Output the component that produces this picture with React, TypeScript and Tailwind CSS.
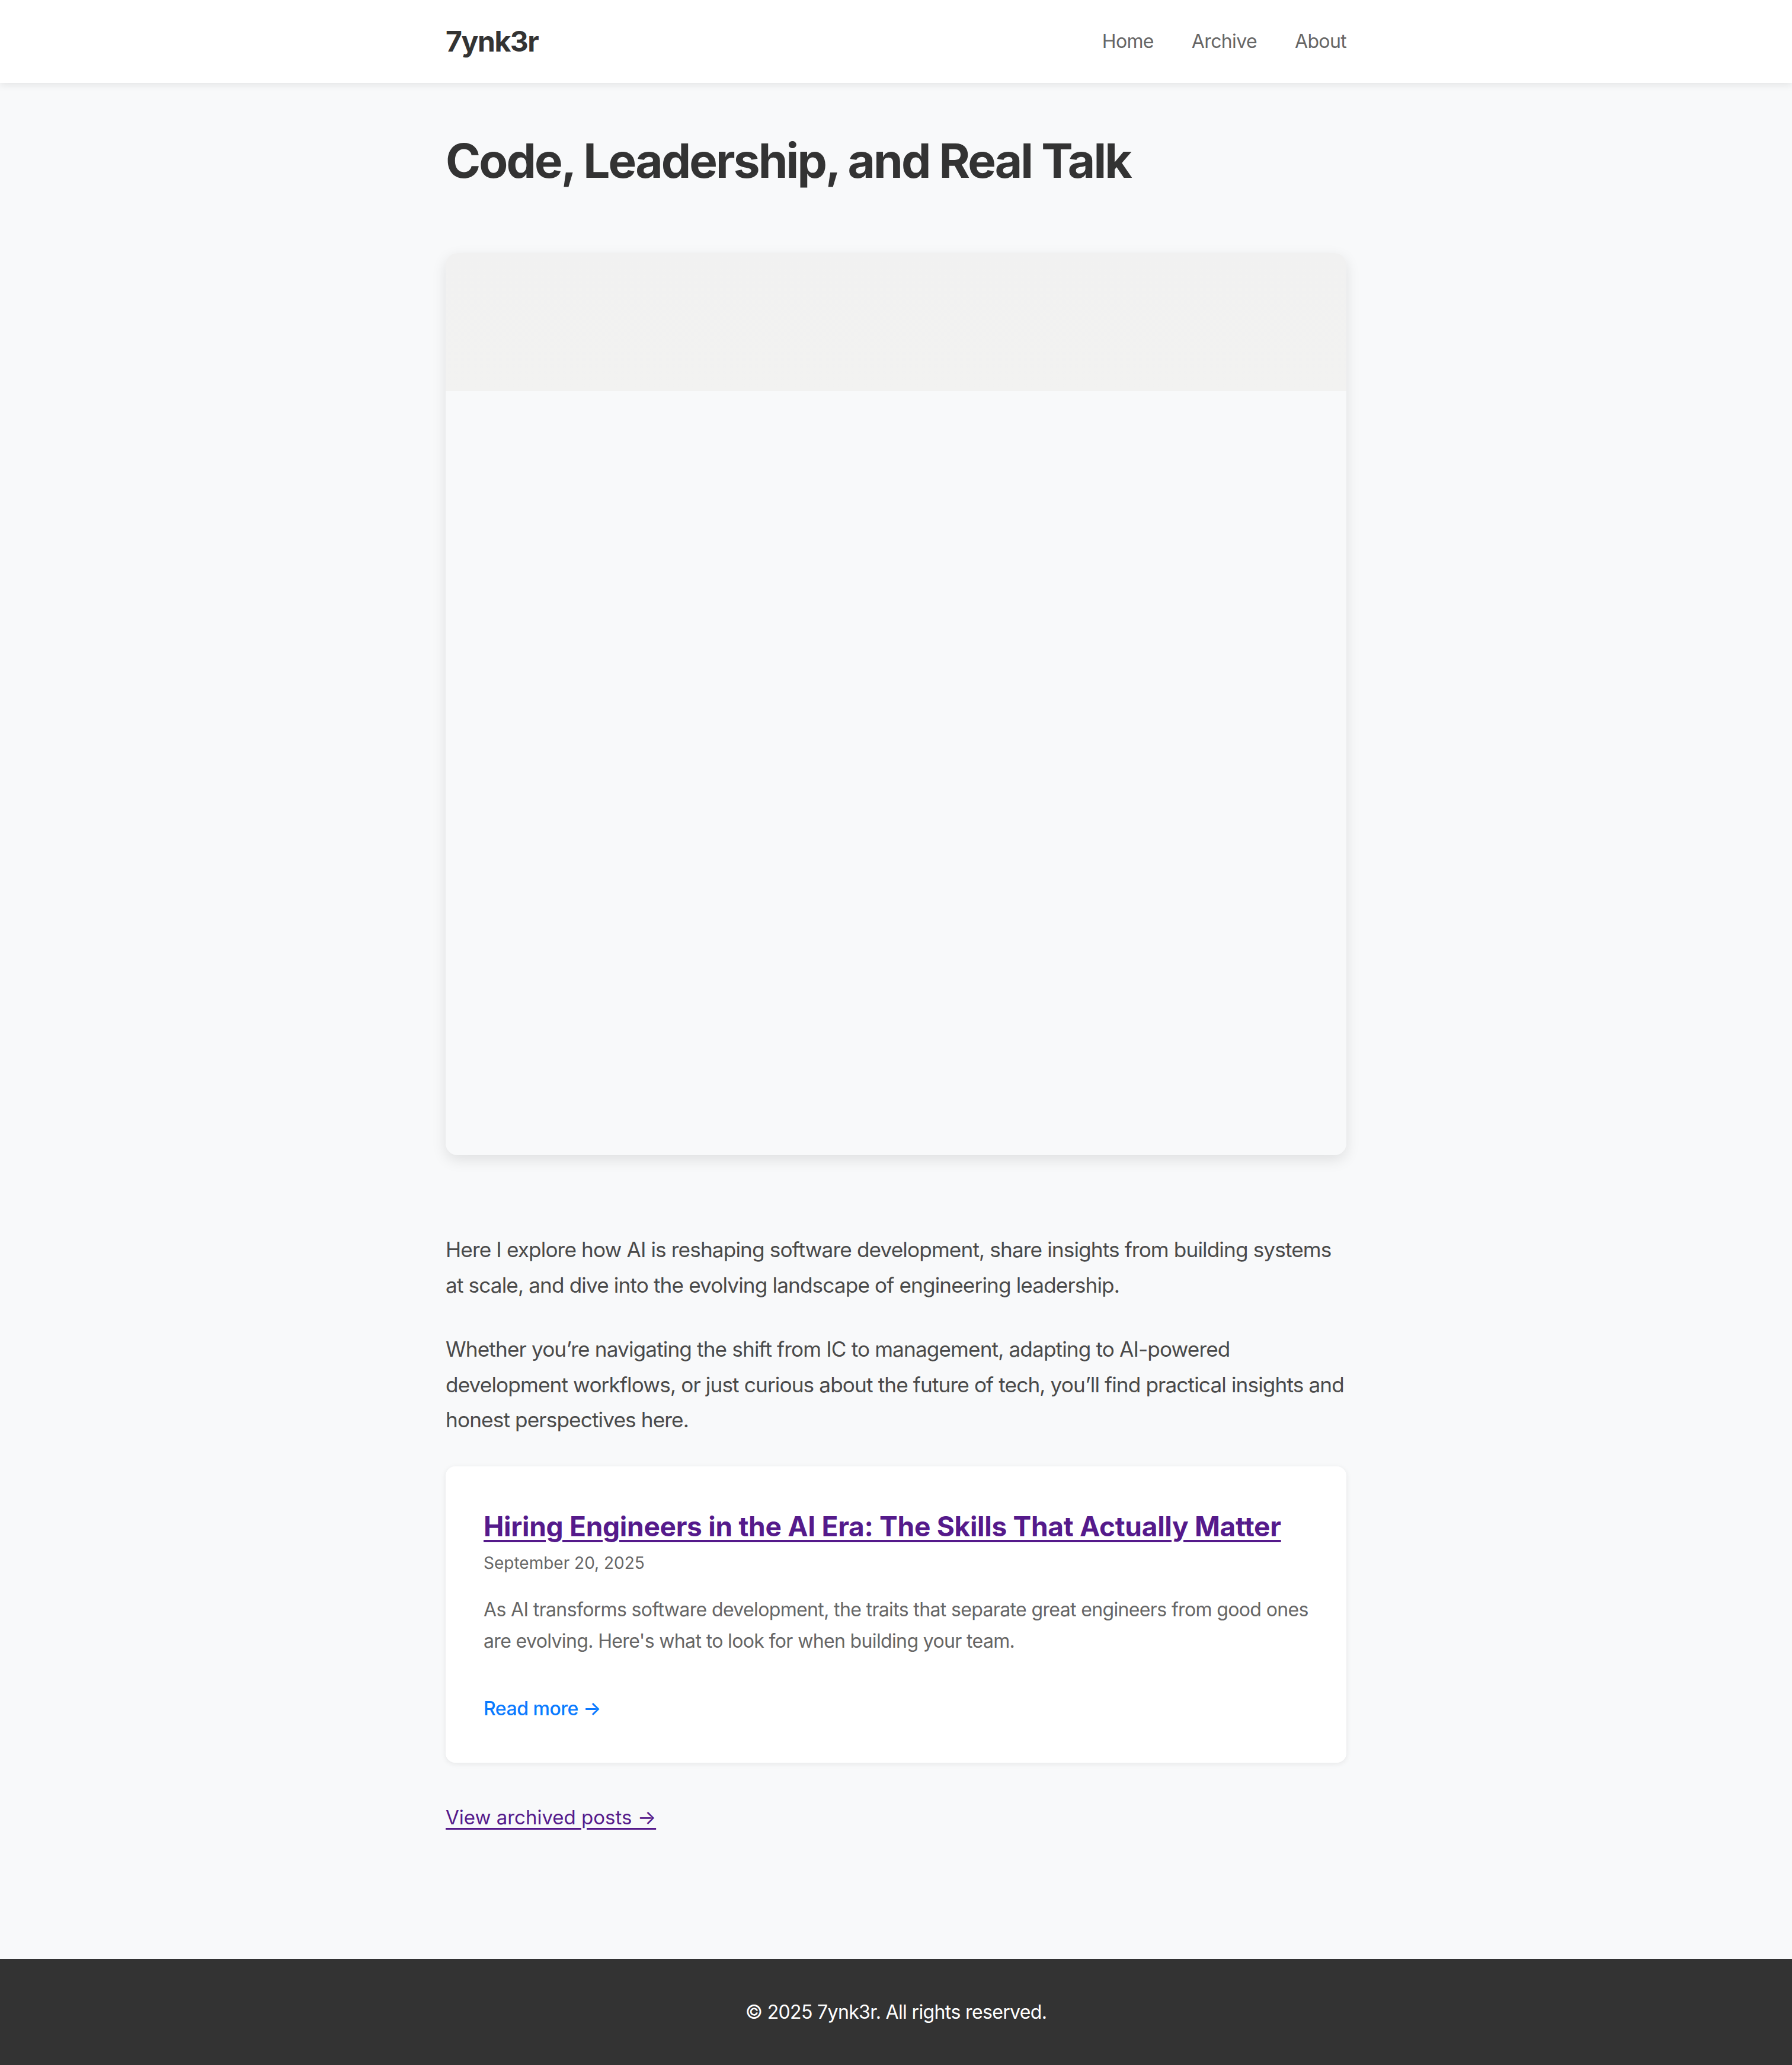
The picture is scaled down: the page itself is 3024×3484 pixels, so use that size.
import React from "react";

const font = "font-['Inter','Liberation_Sans',sans-serif]";

const Header: React.FC = () => {
  return (
    <header className="bg-white h-[140px] shadow-[0_4px_12px_rgba(0,0,0,0.08)] relative z-10">
      <div className="w-[1520px] mx-auto h-full flex items-center justify-between">
        <a className="text-[48px] font-bold text-[#333] leading-none tracking-[-0.03em]">7ynk3r</a>
        <nav className="flex gap-[64px] text-[32px] text-[#666] leading-none tracking-[-0.02em]">
          <a>Home</a>
          <a>Archive</a>
          <a>About</a>
        </nav>
      </div>
    </header>
  );
};

const PostCard: React.FC = () => {
  return (
    <article className="bg-white rounded-[16px] shadow-[0_2px_10px_rgba(0,0,0,0.08)] px-[64px] pt-[62px] pb-[64px]">
      <h2 className="text-[46px] font-bold leading-[1.7] text-[#551a8b] underline decoration-[4px] underline-offset-[6px] tracking-[-0.006em]">
        Hiring Engineers in the AI Era: The Skills That Actually Matter
      </h2>
      <p className="text-[28px] leading-[1.7] text-[#666]">September 20, 2025</p>
      <p className="mt-[28px] text-[32px] leading-[1.65] text-[#666] tracking-[-0.02em]">
        As AI transforms software development, the traits that separate great engineers from good ones
        are evolving. Here's what to look for when building your team.
      </p>
      <a className="block mt-[60px] text-[32px] leading-[1.7] font-medium text-[#0a7aff] tracking-[-0.015em]">
        Read more →
      </a>
    </article>
  );
};

const App: React.FC = () => {
  return (
    <div className={`${font} bg-[#f8f9fa] min-h-[3484px] flex flex-col`}>
      <Header />

      <main className="flex-1 w-[1520px] mx-auto pt-[83px] pb-[204px]">
        <h1 className="text-[80px] font-bold leading-[1.2] text-[#333] tracking-[-0.036em]">
          Code, Leadership, and Real Talk
        </h1>

        <div className="mt-[108px] h-[1522px] rounded-[20px] bg-[#f8f9fa] shadow-[0_8px_24px_rgba(0,0,0,0.1)] overflow-hidden">
          <div className="h-[233px] bg-gradient-to-b from-[#f1f1f1] to-[#f2f2f1]" />
        </div>

        <div className="mt-[130px] text-[35.2px] leading-[1.7] text-[#4a4a4a] tracking-[-0.025em]">
          <p>
            Here I explore how AI is reshaping software development, share insights from building systems
            at scale, and dive into the evolving landscape of engineering leadership.
          </p>
          <p className="mt-[48px]">
            Whether you’re navigating the shift from IC to management, adapting to AI-powered development
            workflows, or just curious about the future of tech, you’ll find practical insights and honest
            perspectives here.
          </p>
        </div>

        <div className="mt-[48px]">
          <PostCard />
        </div>

        <a className="inline-block mt-[64px] text-[33px] leading-[1.7] text-[#551a8b] underline decoration-[3px] underline-offset-[6px]">
          View archived posts →
        </a>
      </main>

      <footer className="bg-[#333] py-[64px] text-center">
        <p className="text-[32px] leading-[1.6] text-white tracking-[-0.02em]">© 2025 7ynk3r. All rights reserved.</p>
      </footer>
    </div>
  );
};

export default App;
